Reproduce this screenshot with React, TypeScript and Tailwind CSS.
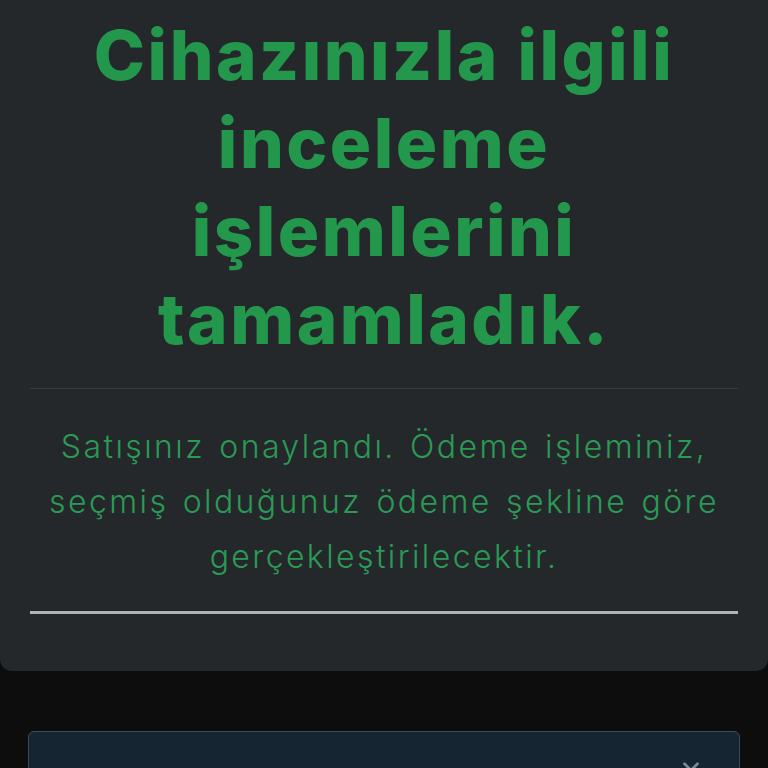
import React from 'react';
import { ChevronDown } from 'lucide-react';

const App: React.FC = () => {
  return (
    <div className="h-[768px] w-full bg-[#0d0d0d] overflow-hidden" style={{ fontFamily: 'Inter, "Noto Sans", sans-serif' }}>
      {/* Result card */}
      <div className="bg-[#25282b] rounded-b-xl px-[30px] pb-[57px]">
        <h1 className="text-[#23974b] text-[69px] leading-[88px] font-extrabold text-center tracking-[2.5px] pt-[11px] pb-[25px] whitespace-nowrap">
          Cihazınızla ilgili
          <br />
          inceleme
          <br />
          işlemlerini
          <br />
          tamamladık.
        </h1>
        <div className="h-px bg-[#393c3f]" />
        <p className="text-[#2a9a55] text-[32px] leading-[55px] font-light text-center tracking-[2.4px] [word-spacing:3px] pt-[30px] pb-[27px] whitespace-nowrap">
          Satışınız onaylandı. Ödeme işleminiz,
          <br />
          seçmiş olduğunuz ödeme şekline göre
          <br />
          gerçekleştirilecektir.
        </p>
        <div className="h-[3px] bg-[#b3b3b3]" />
      </div>

      {/* Collapsed panel */}
      <div className="mx-[28px] mt-[60px] bg-[#152532] border border-[#3d4d59] rounded-md h-[80px] flex justify-end pr-[35px] pt-[22px]">
        <ChevronDown size={26} strokeWidth={2.5} className="text-[#7d8a94]" />
      </div>
    </div>
  );
};

export default App;
